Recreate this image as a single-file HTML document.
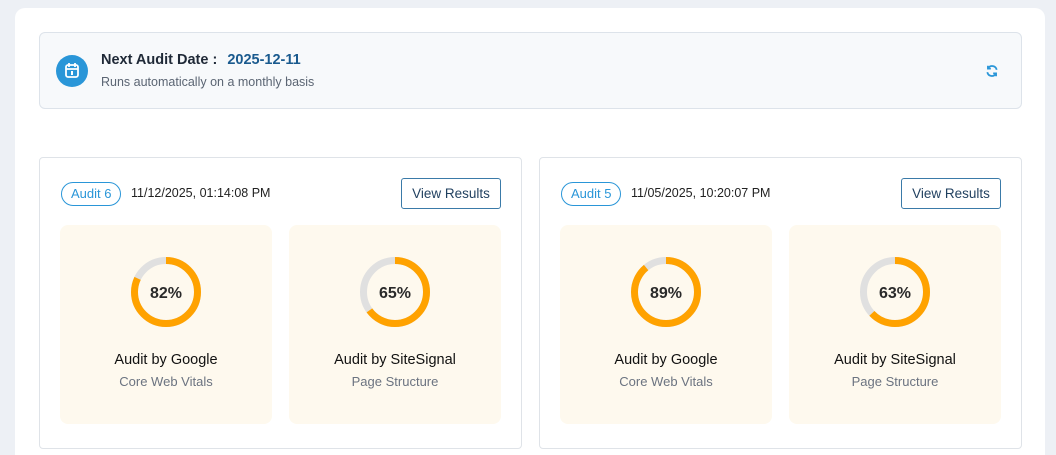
<!DOCTYPE html><html><head><style>
html,body{margin:0;width:1056px;height:455px;overflow:hidden}
body{background:#edf0f5;font-family:"Liberation Sans",Arial,sans-serif;position:relative}
.main{position:absolute;left:15px;top:8px;width:1030px;height:447px;background:#fff;border-radius:10px 10px 0 0}
.ban{position:absolute;left:39px;top:32px;width:981px;height:75px;background:#f7f9fb;border:1px solid #dde3ea;border-radius:6px}
.ic{position:absolute;left:16px;top:22px;width:32px;height:32px;border-radius:50%;background:#2a96d8}
.t1{position:absolute;left:61px;top:19px;font-size:14.5px;font-weight:bold;color:#1f2937}
.t1 b{color:#1a5a8e;margin-left:6px}
.t2{position:absolute;left:61px;top:42px;font-size:12.5px;color:#5b6573}
.card{position:absolute;top:157px;width:481px;height:290px;border:1px solid #dfe3e8;border-radius:4px;background:#fff}
.badge{position:absolute;left:21px;top:24px;height:22px;padding:0 9px;border:1px solid #2a96d8;border-radius:12px;color:#2a96d8;font-size:13px;line-height:22px}
.dt{position:absolute;left:91px;top:28px;font-size:12.5px;color:#222}
.btn{position:absolute;right:20px;top:20px;width:98px;height:29px;border:1px solid #3a7aa8;border-radius:3px;color:#1f3f5f;font-size:13.5px;line-height:29px;text-align:center}
.box{position:absolute;top:67px;width:212px;height:199px;background:#fef9ee;border-radius:8px;text-align:center}
.box svg{position:absolute;left:71px;top:32px}
.pct{position:absolute;left:0;right:0;top:60px;font-size:16px;font-weight:bold;color:#2a2a2a}
.h{position:absolute;left:0;right:0;top:127px;font-size:14.5px;color:#111}
.s{position:absolute;left:0;right:0;top:149px;font-size:13px;color:#6b7380}
</style></head><body>
<div class="main"></div>
<div class="ban"><div class="ic"><svg width="32" height="32" viewBox="0 0 32 32"><rect x="10" y="10" width="12" height="12" rx="2" fill="none" stroke="#fff" stroke-width="1.8"/><path d="M10 14h12M13 8v4M19 8v4" stroke="#fff" stroke-width="1.8"/><rect x="15" y="16" width="2" height="4" fill="#fff"/></svg></div>
<div class="t1">Next Audit Date : <b>2025-12-11</b></div><div class="t2">Runs automatically on a monthly basis</div>
<svg style="position:absolute;left:945px;top:31px" width="14" height="14" viewBox="0 0 24 24" fill="none" stroke="#2a96d8" stroke-width="3"><path d="M20 10A8 8 0 0 0 5.5 7M4 14a8 8 0 0 0 14.5 3"/><path d="M5 3v5h5M19 21v-5h-5"/></svg></div>
<div class="card" style="left:39px"><div class="badge">Audit 6</div><div class="dt">11/12/2025, 01:14:08 PM</div><div class="btn">View Results</div>
<div class="box" style="left:20px"><svg width="70" height="70"><circle cx="35" cy="35" r="31.5" fill="none" stroke="#e0e0e0" stroke-width="7"/><circle cx="35" cy="35" r="31.5" fill="none" stroke="#ffa200" stroke-width="7" stroke-dasharray="162.3 198" transform="rotate(-90 35 35)"/></svg><div class="pct">82%</div><div class="h">Audit by Google</div><div class="s">Core Web Vitals</div></div>
<div class="box" style="left:249px"><svg width="70" height="70"><circle cx="35" cy="35" r="31.5" fill="none" stroke="#e0e0e0" stroke-width="7"/><circle cx="35" cy="35" r="31.5" fill="none" stroke="#ffa200" stroke-width="7" stroke-dasharray="128.6 198" transform="rotate(-90 35 35)"/></svg><div class="pct">65%</div><div class="h">Audit by SiteSignal</div><div class="s">Page Structure</div></div></div>
<div class="card" style="left:539px"><div class="badge">Audit 5</div><div class="dt">11/05/2025, 10:20:07 PM</div><div class="btn">View Results</div>
<div class="box" style="left:20px"><svg width="70" height="70"><circle cx="35" cy="35" r="31.5" fill="none" stroke="#e0e0e0" stroke-width="7"/><circle cx="35" cy="35" r="31.5" fill="none" stroke="#ffa200" stroke-width="7" stroke-dasharray="176.1 198" transform="rotate(-90 35 35)"/></svg><div class="pct">89%</div><div class="h">Audit by Google</div><div class="s">Core Web Vitals</div></div>
<div class="box" style="left:249px"><svg width="70" height="70"><circle cx="35" cy="35" r="31.5" fill="none" stroke="#e0e0e0" stroke-width="7"/><circle cx="35" cy="35" r="31.5" fill="none" stroke="#ffa200" stroke-width="7" stroke-dasharray="124.7 198" transform="rotate(-90 35 35)"/></svg><div class="pct">63%</div><div class="h">Audit by SiteSignal</div><div class="s">Page Structure</div></div></div>
</body></html>
